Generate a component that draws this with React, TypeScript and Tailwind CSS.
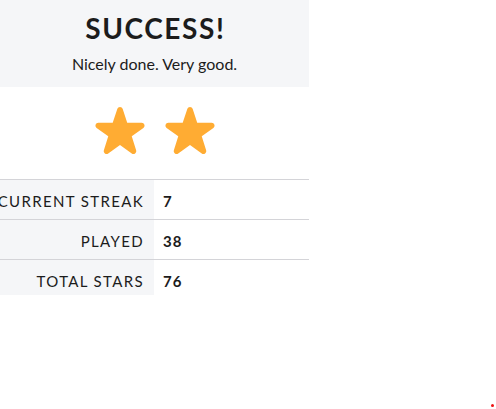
import React from "react";

const stats = [
  { label: "Current Streak", value: 7 },
  { label: "Played", value: 38 },
  { label: "Total Stars", value: 76 },
];

const Star = () => (
  <svg viewBox="0 0 36 36" className="w-[52px] h-[52px]">
    <path
      fill="#FFAC33"
      d="M27.287 34.627c-.404 0-.806-.124-1.152-.371L18 28.422l-8.135 5.834c-.693.496-1.623.496-2.312-.008-.689-.499-.979-1.385-.721-2.194l3.034-9.792-8.062-5.681c-.685-.505-.97-1.393-.708-2.203.264-.808 1.016-1.357 1.866-1.363L12.947 13l3.179-9.549c.268-.809 1.023-1.353 1.874-1.353.851 0 1.606.545 1.875 1.353L23 13l10.036.015c.853.006 1.606.556 1.867 1.363.263.81-.022 1.698-.708 2.203l-8.062 5.681 3.034 9.792c.26.809-.033 1.695-.72 2.194-.347.254-.753.379-1.16.379z"
    />
  </svg>
);

export default function App() {
  return (
    <div
      className="relative w-[496px] h-[409px] bg-white text-[#1c1c1c]"
      style={{ fontFamily: "Lato, 'Noto Sans', sans-serif" }}
    >
      <div className="w-[309px]">
        <div className="bg-[#f5f6f8] h-[87px] flex flex-col items-center pt-[11px]">
          <h1 className="text-[28px] font-bold leading-[34px] tracking-[1.6px] pl-[1.6px]">
            SUCCESS!
          </h1>
          <p className="text-[16px] leading-[24px] mt-[7px]">
            Nicely done. Very good.
          </p>
        </div>
        <div className="h-[92px] flex items-center justify-center gap-[18px] pb-[6px]">
          <Star />
          <Star />
        </div>
        <div>
          {stats.map((s, i) => (
            <div
              key={s.label}
              className={
                "flex border-t border-[#d4d4d8] " +
                (i === stats.length - 1 ? "h-[36px]" : "h-[40px]")
              }
            >
              <div className="w-[154px] bg-[#f5f6f8] flex justify-end pt-[11px] pr-[10px] uppercase text-[15px] leading-[20px] tracking-[1.35px] whitespace-nowrap">
                {s.label}
              </div>
              <div className="flex-1 pt-[11px] pl-[9px] text-[15px] leading-[20px] font-bold tracking-[1px]">
                {s.value}
              </div>
            </div>
          ))}
        </div>
      </div>
      <div className="absolute left-[491px] top-[404px] w-[3px] h-[3px] rounded-full bg-[#ee1111]" />
    </div>
  );
}
